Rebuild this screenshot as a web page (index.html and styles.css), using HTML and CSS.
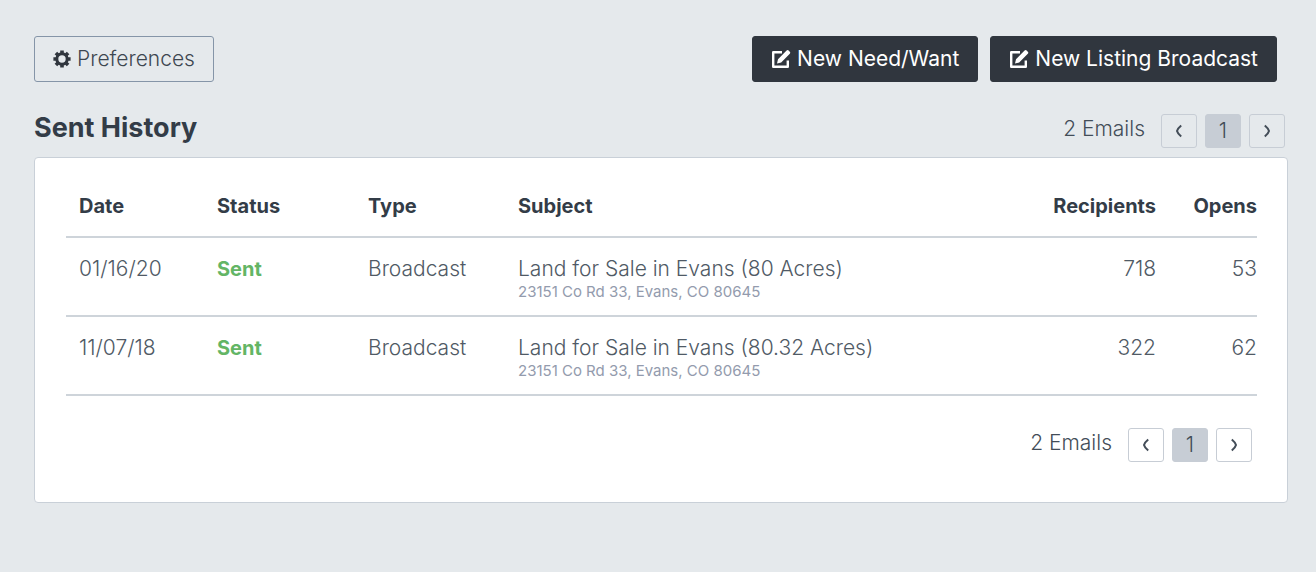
FILE: index.html
```html
<!DOCTYPE html>
<html lang="en">
<head>
  <meta charset="UTF-8" />
  <meta name="viewport" content="width=device-width, initial-scale=1.0" />
  <title>Sent History</title>
  <link rel="stylesheet" href="styles.css">
</head>
<body>
  <svg class="sprite" aria-hidden="true">
    <symbol id="edit" viewBox="0 0 20 20">
      <path d="M11 3.2H2.2V17.8H16.8V11.5" fill="none" stroke="currentColor" stroke-width="2.4" stroke-linejoin="round" />
      <path d="M6 14.5L7 10.2L15.6 1.6Q16.6 .6 17.6 1.6L18.8 2.8Q19.8 3.8 18.8 4.8L10.2 13.4Z" fill="currentColor" />
    </symbol>
    <symbol id="prev" viewBox="0 0 8 14">
      <path d="M6.2 1.5Q2.6 4.5 2 7Q2.6 9.5 6.2 12.5" fill="none" stroke="currentColor" stroke-width="2" />
    </symbol>
    <symbol id="next" viewBox="0 0 8 14">
      <path d="M1.8 1.5Q5.4 4.5 6 7Q5.4 9.5 1.8 12.5" fill="none" stroke="currentColor" stroke-width="2" />
    </symbol>
  </svg>

  <div class="container">
    <div class="toolbar">
      <button class="btn btn-outline">
        <svg class="icon-gear" viewBox="0 0 18 18" aria-hidden="true">
          <circle cx="9" cy="9" r="5.2" fill="none" stroke="currentColor" stroke-width="3" />
          <g stroke="currentColor" stroke-width="3.6">
            <path d="M9 .4V3.5M9 14.5V17.6M.4 9H3.5M14.5 9H17.6" />
            <path d="M2.9 2.9L5 5M13 13L15.1 15.1M15.1 2.9L13 5M5 13L2.9 15.1" />
          </g>
        </svg>
        Preferences
      </button>
      <div class="actions">
        <button class="btn btn-dark"><svg class="icon-edit" aria-hidden="true"><use href="#edit" /></svg>New Need/Want</button>
        <button class="btn btn-dark"><svg class="icon-edit" aria-hidden="true"><use href="#edit" /></svg>New Listing Broadcast</button>
      </div>
    </div>

    <div class="heading">
      <h2>Sent History</h2>
      <div class="pager">
        <span class="count">2 Emails</span>
        <button aria-label="Previous"><svg><use href="#prev" /></svg></button>
        <button class="active">1</button>
        <button aria-label="Next"><svg><use href="#next" /></svg></button>
      </div>
    </div>

    <div class="card">
      <table>
        <thead>
          <tr>
            <th class="date">Date</th>
            <th class="status">Status</th>
            <th class="type">Type</th>
            <th>Subject</th>
            <th class="num recipients">Recipients</th>
            <th class="num opens">Opens</th>
          </tr>
        </thead>
        <tbody>
          <tr>
            <td>01/16/20</td>
            <td class="sent">Sent</td>
            <td>Broadcast</td>
            <td>Land for Sale in Evans (80 Acres)<small>23151 Co Rd 33, Evans, CO 80645</small></td>
            <td class="num">718</td>
            <td class="num">53</td>
          </tr>
          <tr>
            <td>11/07/18</td>
            <td class="sent">Sent</td>
            <td>Broadcast</td>
            <td>Land for Sale in Evans (80.32 Acres)<small>23151 Co Rd 33, Evans, CO 80645</small></td>
            <td class="num">322</td>
            <td class="num">62</td>
          </tr>
        </tbody>
      </table>
      <div class="pager">
        <span class="count">2 Emails</span>
        <button aria-label="Previous"><svg><use href="#prev" /></svg></button>
        <button class="active">1</button>
        <button aria-label="Next"><svg><use href="#next" /></svg></button>
      </div>
    </div>
  </div>
</body>
</html>
```
FILE: styles.css
```css
* { box-sizing: border-box; }
body { margin: 0; background: #e5e9ec; color: #505a65; font-family: Inter, "Open Sans", sans-serif; font-size: 21px; font-weight: 300; line-height: 24px; }
button { font: inherit; color: inherit; cursor: pointer; }
.sprite { display: none; }
.container { padding: 36px 28px 40px 34px; }

.toolbar { display: flex; justify-content: space-between; padding-right: 11px; }
.actions { display: flex; gap: 12px; }
.btn { display: flex; align-items: center; height: 46px; padding: 0 18px; border-radius: 3px; white-space: nowrap; }
.btn-outline { gap: 6px; background: transparent; border: 1px solid #8595a8; color: #3d4650; }
.btn-dark { gap: 6px; background: #30363e; border: 1px solid #30363e; color: #fff; font-weight: 400; }
.icon-gear { width: 18px; height: 18px; color: #30363e; }
.icon-edit { width: 20px; height: 20px; }

.heading { display: flex; justify-content: space-between; align-items: flex-end; margin-top: 26px; padding-right: 3px; }
h2 { margin: 0; font-size: 27px; line-height: 40px; font-weight: 700; color: #333c47; }

.pager { display: flex; justify-content: flex-end; align-items: center; gap: 8px; color: #434d58; }
.pager .count { margin-right: 8px; line-height: 28px; padding-bottom: 4px; }
.pager button { display: flex; align-items: center; justify-content: center; width: 36px; height: 34px; padding: 0; background: transparent; border: 1px solid #c7cdd5; border-radius: 3px; }
.pager .active { background: #c7cdd5; }
.pager svg { width: 8px; height: 14px; }

.card { margin-top: 9px; padding: 24px 30px 40px 31px; background: #fff; border: 1px solid #c9d0d8; border-radius: 4px; }
.card .pager { margin-top: 32px; padding-right: 5px; }

table { width: 100%; border-collapse: collapse; table-layout: fixed; }
th, td { padding: 19px 0 12px; text-align: left; vertical-align: top; border-bottom: 2px solid #ced4da; }
th { padding: 12px 0 18px; color: #333c47; font-size: 20px; font-weight: 700; }
th:first-child, td:first-child { padding-left: 13px; }
.date { width: 151px; }
.status { width: 151px; }
.type { width: 150px; }
.recipients { width: 140px; }
.opens { width: 101px; }
.num { text-align: right; }
td.sent { color: #63b565; font-size: 20px; font-weight: 700; }
small { display: block; color: #939bad; font-size: 15px; line-height: 22px; font-weight: 400; }
```
